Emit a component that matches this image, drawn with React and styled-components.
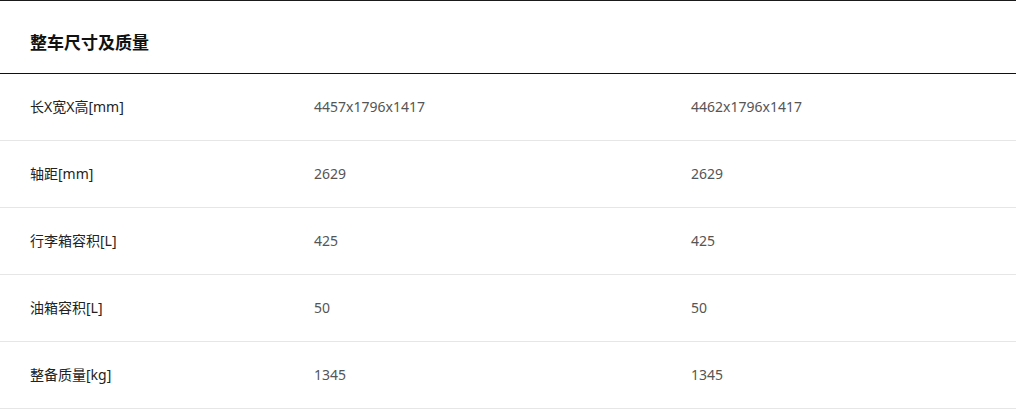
import React from "react";
import styled, { createGlobalStyle } from "styled-components";

const GlobalStyle = createGlobalStyle`
    html, body {
        margin: 0;
        padding: 0;
        background: #fff;
    }
    body {
        font-family: "Noto Sans", "Noto Sans CJK SC", sans-serif;
    }
`;

const Section = styled.section`
    width: 1016px;
    border-top: 1px solid #1a1a1a;
`;

const Title = styled.h2`
    margin: 0;
    padding: 31px 30px 19px;
    height: 22px;
    line-height: 22px;
    font-size: 17px;
    font-weight: 700;
    color: #111;
    border-bottom: 1px solid #111;
`;

const Row = styled.div`
    display: grid;
    grid-template-columns: 284px 377px 1fr;
    align-items: center;
    height: 66px;
    padding-left: 30px;
    border-bottom: 1px solid #e6e6e6;
    font-size: 14px;
    line-height: 20px;
`;

const Label = styled.div`
    color: #222;
    padding-bottom: 1px;
`;

const Value = styled.div`
    color: #555;
    padding-bottom: 1px;
`;

const specs = [
    { name: "长X宽X高[mm]", values: ["4457x1796x1417", "4462x1796x1417"] },
    { name: "轴距[mm]", values: ["2629", "2629"] },
    { name: "行李箱容积[L]", values: ["425", "425"] },
    { name: "油箱容积[L]", values: ["50", "50"] },
    { name: "整备质量[kg]", values: ["1345", "1345"] },
];

export default function App() {
    return (
        <Section>
            <GlobalStyle />
            <Title>整车尺寸及质量</Title>
            {specs.map((spec) => (
                <Row key={spec.name}>
                    <Label>{spec.name}</Label>
                    {spec.values.map((v, i) => (
                        <Value key={i}>{v}</Value>
                    ))}
                </Row>
            ))}
        </Section>
    );
}
